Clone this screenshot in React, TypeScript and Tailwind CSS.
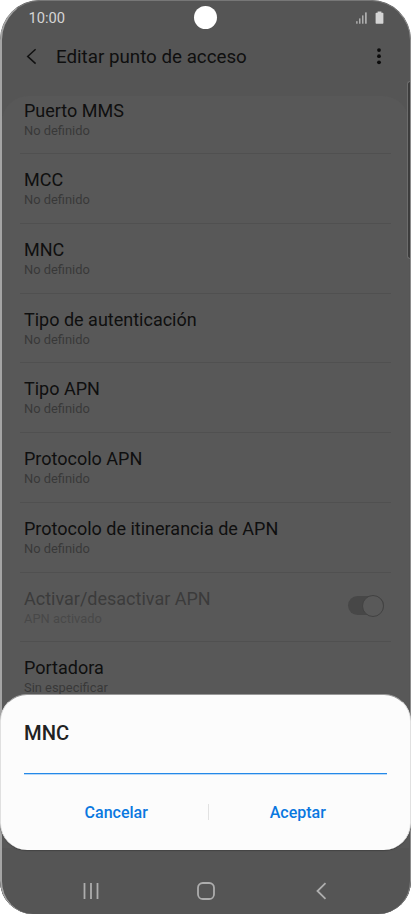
import type { ReactNode } from "react";

type Setting = {
  title: string;
  value: string;
  disabled?: boolean;
};

const settings: Setting[] = [
  { title: "Puerto MMS", value: "No definido" },
  { title: "MCC", value: "No definido" },
  { title: "MNC", value: "No definido" },
  { title: "Tipo de autenticación", value: "No definido" },
  { title: "Tipo APN", value: "No definido" },
  { title: "Protocolo APN", value: "No definido" },
  { title: "Protocolo de itinerancia de APN", value: "No definido" },
  { title: "Activar/desactivar APN", value: "APN activado", disabled: true },
  { title: "Portadora", value: "Sin especificar" },
];

function StatusBar() {
  return (
    <div className="flex h-9 shrink-0 items-center justify-between pl-[28.5px] pr-[27px]">
      <span className="text-[14.7px] leading-none text-[#d6d6d6]">10:00</span>
      <div className="flex items-center gap-[7px]">
        {/* Signal */}
        <svg width="12" height="12" viewBox="0 0 12 12" fill="#c4c4c4">
          <rect x="0.3" y="9.2" width="1.2" height="2.5" />
          <rect x="3.2" y="6.4" width="1.2" height="5.3" />
          <rect x="6.2" y="3.4" width="1.2" height="8.3" />
          <rect x="9.2" y="0.4" width="1.4" height="11.3" />
        </svg>
        {/* Battery */}
        <svg width="9" height="14" viewBox="0 0 9 14" fill="#d4d4d4">
          <path d="M2.6 .4h3.8v1.3H7.700a.7.7 0 0 1 .7.7v9.700a.7.7 0 0 1-.7.7H1.300a.7.7 0 0 1-.7-.7V2.400a.7.7 0 0 1 .7-.7h1.300z" />
        </svg>
      </div>
    </div>
  );
}

function Header() {
  return (
    <header className="flex h-[60px] shrink-0 items-start pl-[25px] pr-[29px] pt-[9px]">
      <button className="flex h-6 w-[31px] items-center">
        <svg width="14" height="18" viewBox="0 0 14 18" fill="none" stroke="#111" strokeWidth="1.5">
          <path d="M10.600 1.200 2.700 8.400l7.900 7.200" />
        </svg>
      </button>
      <h1 className="flex-1 text-[18.75px] leading-[25px] text-[#0f0f0f]">Editar punto de acceso</h1>
      <button className="flex h-6 items-center">
        <svg width="6" height="18" viewBox="0 0 6 18" fill="#0c0c0c">
          <circle cx="3" cy="2.100" r="1.900" />
          <circle cx="3" cy="8.200" r="1.900" />
          <circle cx="3" cy="14.300" r="1.900" />
        </svg>
      </button>
    </header>
  );
}

function Toggle() {
  return (
    <div className="mt-2 flex h-[22px] w-9 items-center">
      <div className="flex h-[19px] w-full items-center justify-end rounded-full bg-[#474747]">
        <div className="size-[22px] shrink-0 rounded-full border border-[#424242] bg-[#595959]" />
      </div>
    </div>
  );
}

function SettingRow({ title, value, disabled }: Setting) {
  return (
    <div className="mx-[18px] flex h-[69.7px] shrink-0 justify-between border-b border-[#505050] pl-1 pr-[7px] pt-[14px]">
      <div>
        <div className={`text-[18px] leading-6 ${disabled ? "text-[#3b3b3b]" : "text-[#0f0f0f]"}`}>{title}</div>
        <div className={`text-[12.9px] leading-[16.5px] ${disabled ? "text-[#484848]" : "text-[#383838]"}`}>{value}</div>
      </div>
      {disabled && <Toggle />}
    </div>
  );
}

function DialogButton({ children }: { children: ReactNode }) {
  return <button className="flex-1 text-center text-[16px] font-medium leading-6 text-[#0a78e0]">{children}</button>;
}

function Dialog() {
  return (
    <div className="absolute left-0 top-[694px] flex h-[156px] w-[411px] flex-col rounded-[27px] border-x border-t border-x-[#e0e0e0] border-t-[#999] bg-[#fcfcfc] px-[23px] pt-[26px] shadow-[0_1px_1px_#444]">
      <h2 className="text-[20.2px] font-medium leading-6 text-[#222]">MNC</h2>
      <div className="mt-[28px] h-px bg-[#2489e8] shadow-[0_1px_0_#b9d8f7]" />
      <div className="-mr-px mt-[27px] flex items-center pl-[2px]">
        <DialogButton>Cancelar</DialogButton>
        <div className="-mr-px -mt-[2px] ml-px h-4 w-px bg-[#e2e2e2]" />
        <DialogButton>Aceptar</DialogButton>
      </div>
    </div>
  );
}

function NavigationBar() {
  return (
    <nav className="absolute bottom-0 left-0 flex h-[46px] w-full items-center justify-between bg-[#555] pl-[82px] pr-[80px]">
      <svg width="20" height="20" viewBox="0 0 20 20" stroke="#adadad" strokeWidth="1.8">
        <path d="M2.500 2v16M9 2v16M15.500 2v16" />
      </svg>
      <svg className="-ml-px" width="20" height="20" viewBox="0 0 20 20" fill="none" stroke="#adadad" strokeWidth="1.8">
        <rect x="2" y="2" width="16" height="16" rx="4.800" />
      </svg>
      <svg width="20" height="20" viewBox="0 0 20 20" fill="none" stroke="#adadad" strokeWidth="1.8">
        <path d="M14.500 2.200 6.500 10l8 7.800" />
      </svg>
    </nav>
  );
}

export default function App() {
  return (
    <div className="h-[914px] w-[411px] overflow-hidden bg-white font-[Roboto,sans-serif]">
      <div className="relative flex h-full flex-col overflow-hidden rounded-b-[33px] rounded-t-[40px] bg-[#555]">
        <StatusBar />
        {/* Camera cutout */}
        <div className="absolute left-[194px] top-[6px] size-[23px] rounded-full bg-white" />
        <Header />
        <main className="mx-0.5 flex h-[752px] flex-col overflow-hidden rounded-t-[26px] bg-[#585858]">
          <div className="-mt-[11.300px] flex flex-col">
            {settings.map((item) => (
              <SettingRow key={item.title} {...item} />
            ))}
          </div>
        </main>
        <NavigationBar />
        {/* Scrollbar */}
        <div className="absolute right-0 top-[81px] h-[178px] w-[4px] rounded-l-[3px] border border-r-0 border-[#6c6c6c] bg-[#3c3c3c]" />
        {/* Phone edge */}
        <div className="absolute inset-0 rounded-b-[33px] rounded-t-[40px] border-l-2 border-r border-t border-l-[#a5a5a5] border-r-[#8c8c8c] border-t-[#777]" />
        <Dialog />
      </div>
    </div>
  );
}
